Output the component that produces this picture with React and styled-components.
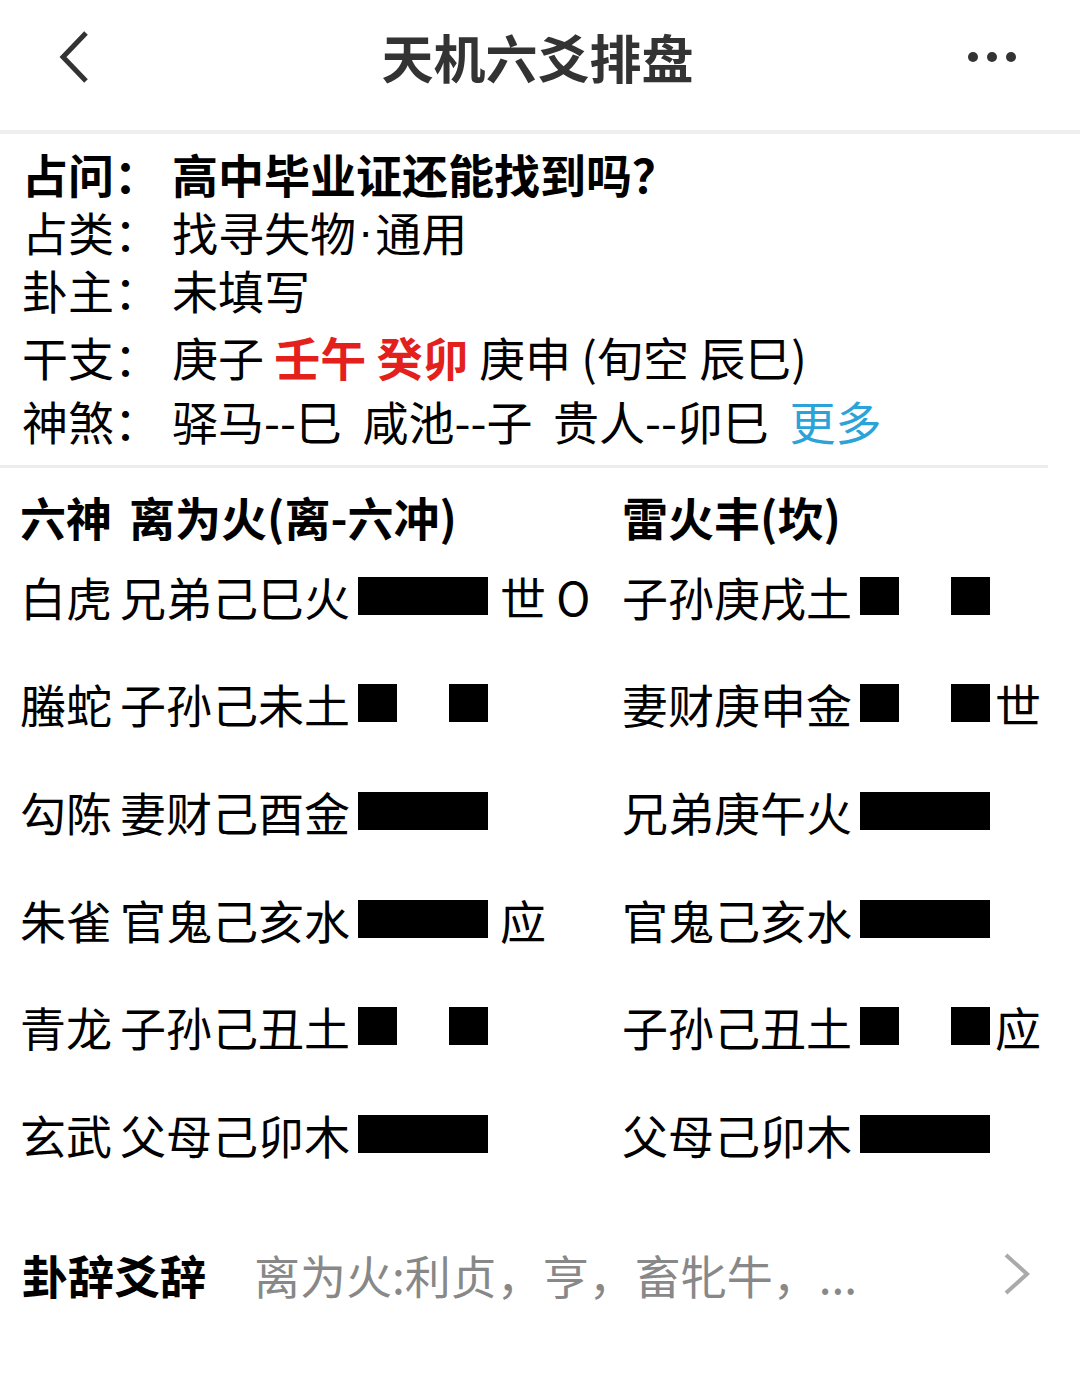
import React from 'react';
import styled, { createGlobalStyle } from 'styled-components';

const GlobalStyle = createGlobalStyle`
  html, body { margin: 0; padding: 0; background: #fff; }
  body {
    font-family: "Noto Sans CJK SC", "Noto Sans", sans-serif;
    color: #000;
  }
  * { box-sizing: border-box; }
`;

const Page = styled.div`
  width: 1080px;
  min-height: 1385px;
  background: #fff;
`;

const Header = styled.header`
  height: 134px;
  padding: 0 63px 16px 58px;
  display: flex;
  align-items: center;
  border-bottom: 4px solid #efefef;
`;

const IconButton = styled.div`
  width: 64px;
  height: 64px;
  display: flex;
  align-items: center;
  justify-content: ${(p) => (p.$end ? 'flex-end' : 'flex-start')};
`;

const Title = styled.h1`
  flex: 1;
  margin: 0;
  text-align: center;
  font-size: 52px;
  font-weight: 700;
  color: #333;
  line-height: 64px;
`;

const Info = styled.section`
  width: 1048px;
  padding: 10px 0 16px 22px;
  border-bottom: 3px solid #ededed;
`;

const InfoRow = styled.div`
  display: flex;
  align-items: center;
  height: 58px;
  margin-top: ${(p) => p.$gap || 0}px;
  font-size: 46px;
  line-height: 58px;
  font-weight: ${(p) => (p.$bold ? 700 : 400)};
  white-space: nowrap;
`;

const Label = styled.span`
  width: 150px;
  flex: none;
`;

const Dot = styled.span`
  font-family: "Liberation Sans", sans-serif;
  margin: 0 2px;
`;

const Red = styled.span`
  color: #e3201b;
  font-weight: 700;
`;

const More = styled.span`
  color: #2ba3d8;
`;

const Gua = styled.section`
  padding: 15px 0 0 20px;
`;

const HeadRow = styled.div`
  display: grid;
  grid-template-columns: 602px 1fr;
  height: 52px;
  margin-bottom: 7px;
`;

const GuaHead = styled.div`
  display: flex;
  align-items: center;
  font-size: 46px;
  font-weight: 700;
  white-space: nowrap;
`;

const HeadGap = styled.span`
  display: inline-block;
  width: 17px;
`;

const YaoGrid = styled.div`
  display: grid;
  grid-template-columns: 602px 1fr;
  grid-auto-rows: 107.6px;
`;

const YaoRow = styled.div`
  display: flex;
  align-items: center;
  font-size: 46px;
  line-height: 58px;
  white-space: nowrap;
`;

const God = styled.span`
  margin-right: 8px;
`;

const Bar = styled.div`
  width: 130px;
  height: 38px;
  margin-left: 8px;
  display: flex;
  justify-content: space-between;
  background: ${(p) => (p.$yang ? '#000' : 'transparent')};
`;

const Seg = styled.div`
  width: 39px;
  height: 38px;
  background: #000;
`;

const Mark = styled.span`
  margin-left: ${(p) => (p.$tight ? 5 : 12)}px;
`;

const Footer = styled.div`
  margin-top: 36px;
  height: 100px;
  padding: 0 48px 0 22px;
  display: flex;
  align-items: center;
  font-size: 46px;
  white-space: nowrap;
`;

const FooterTitle = styled.span`
  font-weight: 700;
  margin-right: 48px;
`;

const FooterText = styled.span`
  flex: 1;
  color: #888;
`;

const left = [
  { god: '白虎', rel: '兄弟己巳火', yang: true, mark: '世 O' },
  { god: '螣蛇', rel: '子孙己未土', yang: false },
  { god: '勾陈', rel: '妻财己酉金', yang: true },
  { god: '朱雀', rel: '官鬼己亥水', yang: true, mark: '应' },
  { god: '青龙', rel: '子孙己丑土', yang: false },
  { god: '玄武', rel: '父母己卯木', yang: true },
];

const right = [
  { rel: '子孙庚戌土', yang: false },
  { rel: '妻财庚申金', yang: false, mark: '世' },
  { rel: '兄弟庚午火', yang: true },
  { rel: '官鬼己亥水', yang: true },
  { rel: '子孙己丑土', yang: false, mark: '应' },
  { rel: '父母己卯木', yang: true },
];

function Yao({ yang }) {
  return (
    <Bar $yang={yang}>
      {!yang && (
        <>
          <Seg />
          <Seg />
        </>
      )}
    </Bar>
  );
}

export default function App() {
  const rows = [];
  for (let i = 0; i < 6; i++) {
    const l = left[i];
    const r = right[i];
    rows.push(
      <YaoRow key={'l' + i}>
        <God>{l.god}</God>
        {l.rel}
        <Yao yang={l.yang} />
        {l.mark && <Mark>{l.mark}</Mark>}
      </YaoRow>
    );
    rows.push(
      <YaoRow key={'r' + i}>
        {r.rel}
        <Yao yang={r.yang} />
        {r.mark && <Mark $tight>{r.mark}</Mark>}
      </YaoRow>
    );
  }
  return (
    <Page>
      <GlobalStyle />
      <Header>
        <IconButton>
          <svg width="34" height="54" viewBox="0 0 34 54">
            <path d="M28 3 L5 27 L28 51" fill="none" stroke="#333" strokeWidth="5" />
          </svg>
        </IconButton>
        <Title>天机六爻排盘</Title>
        <IconButton $end>
          <svg width="50" height="12" viewBox="0 0 50 12">
            <circle cx="6" cy="6" r="5" fill="#333" />
            <circle cx="25" cy="6" r="5" fill="#333" />
            <circle cx="44" cy="6" r="5" fill="#333" />
          </svg>
        </IconButton>
      </Header>

      <Info>
        <InfoRow $bold>
          <Label>占问：</Label>高中毕业证还能找到吗？
        </InfoRow>
        <InfoRow>
          <Label>占类：</Label>找寻失物<Dot>·</Dot>通用
        </InfoRow>
        <InfoRow>
          <Label>卦主：</Label>未填写
        </InfoRow>
        <InfoRow $gap={9}>
          <Label>干支：</Label>庚子&nbsp;<Red>壬午 癸卯</Red>&nbsp;庚申 (旬空 辰巳)
        </InfoRow>
        <InfoRow $gap={6}>
          <Label>神煞：</Label>驿马--巳&nbsp;&nbsp;咸池--子&nbsp;&nbsp;贵人--卯巳&nbsp;&nbsp;<More>更多</More>
        </InfoRow>
      </Info>

      <Gua>
        <HeadRow>
          <GuaHead>
            六神<HeadGap />离为火(离-六冲)
          </GuaHead>
          <GuaHead>雷火丰(坎)</GuaHead>
        </HeadRow>
        <YaoGrid>{rows}</YaoGrid>
      </Gua>

      <Footer>
        <FooterTitle>卦辞爻辞</FooterTitle>
        <FooterText>离为火:利贞，亨，畜牝牛，...</FooterText>
        <svg width="30" height="44" viewBox="0 0 30 44">
          <path d="M4 3 L25 22 L4 41" fill="none" stroke="#aaa" strokeWidth="4" />
        </svg>
      </Footer>
    </Page>
  );
}
